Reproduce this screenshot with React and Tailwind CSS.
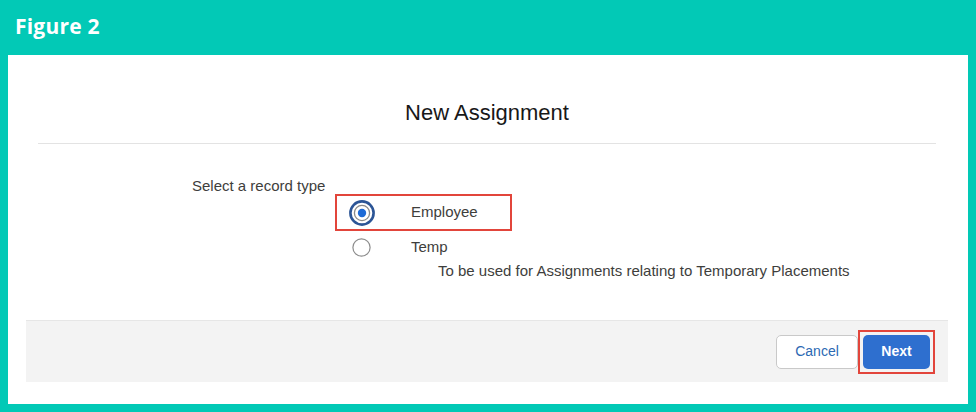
import React from "react";

const SelectedRadio = () => (
  <svg width="26" height="26" viewBox="0 0 26 26">
    <circle cx="13" cy="13" r="11.6" fill="#fff" stroke="#2c5596" strokeWidth="2.6" />
    <circle cx="13" cy="13" r="7.6" fill="#fff" stroke="#8a8a8a" strokeWidth="1.3" />
    <circle cx="13" cy="13" r="4.2" fill="#1d6ad6" />
  </svg>
);

const EmptyRadio = () => (
  <svg width="19" height="19" viewBox="0 0 19 19">
    <circle cx="9.5" cy="9.5" r="8.6" fill="#fff" stroke="#8c8c8c" strokeWidth="1.2" />
  </svg>
);

export default function App() {
  return (
    <div className="w-[976px] h-[412px] bg-[#02c9b6] flex flex-col px-[8px] pb-[8px] font-['Liberation_Sans',Arial,sans-serif]">
      <div className="h-[55px] flex items-center pl-[7px] pb-[1px]">
        <span className="text-white text-[21px] font-bold tracking-[0.2px] font-['Open_Sans',sans-serif]">
          Figure 2
        </span>
      </div>

      <div className="flex-1 bg-white flex flex-col">
        <div className="h-[89px] mx-[30px] mr-[32px] border-b border-[#e3e3e3] flex items-end justify-center pb-[19px]">
          <h2 className="text-[22px] text-[#181818] leading-none">New Assignment</h2>
        </div>

        <div className="flex-1 pl-[184px] pt-[34px]">
          <p className="text-[15px] text-[#3e3e3c] leading-none">Select a record type</p>
          <div className="ml-[143px] mt-[1px] w-[177px] h-[37px] border-2 border-[#e2453b] flex items-center pl-[12px]">
            <SelectedRadio />
            <span className="ml-[36px] text-[15px] text-[#3e3e3c]">Employee</span>
          </div>
          <div className="ml-[160px] mt-[5px] flex items-center">
            <EmptyRadio />
            <span className="ml-[40px] text-[15px] text-[#3e3e3c]">Temp</span>
          </div>
          <p className="ml-[246px] mt-[4px] text-[15px] text-[#3e3e3c] leading-none">
            To be used for Assignments relating to Temporary Placements
          </p>
        </div>

        <div className="h-[62px] ml-[18px] mr-[20px] mb-[22px] bg-[#f3f3f3] border-t border-[#e6e6e6] flex items-center justify-end pr-[13px]">
          <button className="w-[82px] h-[34px] bg-white border border-[#c9c9c9] rounded-[5px] text-[14px] text-[#2c69b3]">
            Cancel
          </button>
          <div className="border-2 border-[#e2453b] p-[3px]">
            <button className="w-[67px] h-[34px] bg-[#2e6fcf] rounded-[5px] text-[14px] text-white font-bold">
              Next
            </button>
          </div>
        </div>
      </div>
    </div>
  );
}
